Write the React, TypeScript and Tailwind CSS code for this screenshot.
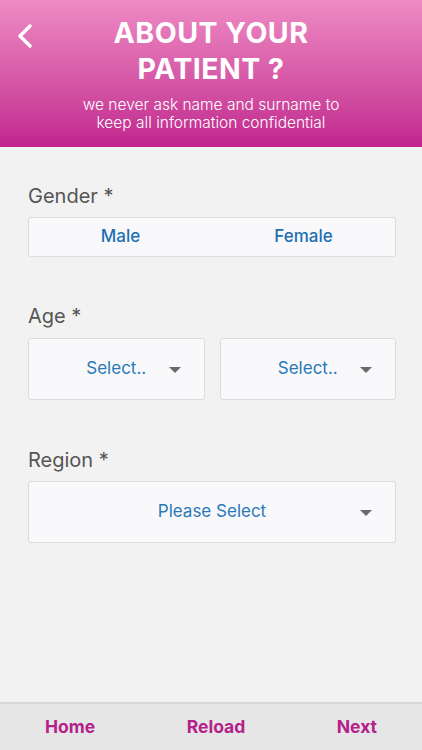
import React from 'react';

const Caret = () => (
  <svg width="12" height="7" viewBox="0 0 12 7" className="shrink-0">
    <path d="M0 0 L12 0 L6 6 Z" fill="#6b6b6b" />
  </svg>
);

const SelectBox = ({ label, className }: { label: string; className?: string }) => (
  <div className={`relative flex items-center justify-center h-[62px] bg-[#f9f9fb] border border-[#dcdcdc] rounded-[3px] ${className ?? ''}`}>
    <span className="text-[17px] text-[#2a78b8]">{label}</span>
    <div className="absolute right-[23px] top-[28px]">
      <Caret />
    </div>
  </div>
);

export default function App() {
  return (
    <div className="w-[422px] h-[750px] flex flex-col bg-[#f2f2f2] overflow-hidden" style={{ fontFamily: 'Inter, Roboto, sans-serif' }}>
      {/* Header */}
      <div className="relative h-[147px] shrink-0 bg-gradient-to-b from-[#ee8ac4] to-[#c0228e] flex flex-col items-center pt-[15px]">
        <button className="absolute left-[14px] top-[22px] text-white">
          <svg width="22" height="28" viewBox="0 0 22 28">
            <path d="M16 4 L6 14 L16 24" stroke="white" strokeWidth="3.5" fill="none" strokeLinecap="round" strokeLinejoin="round" />
          </svg>
        </button>
        <h1 className="text-white font-bold text-[28.5px] leading-[36px] text-center tracking-[0.5px]">
          ABOUT YOUR
          <br />
          PATIENT ?
        </h1>
        <p className="mt-[9px] text-white font-light text-[15.5px] leading-[18px] text-center">
          we never ask name and surname to
          <br />
          keep all information confidential
        </p>
      </div>

      {/* Form */}
      <div className="flex-1 pl-[28px] pr-[26px] pt-[36px]">
        <div className="text-[20px] text-[#555] leading-[26px]">Gender *</div>
        <div className="mt-[8px] h-[40px] flex bg-[#f9f9fb] border border-[#dcdcdc] rounded-[3px]">
          <div className="flex-1 flex items-center justify-center text-[17px] font-medium text-[#1d6fb4]">Male</div>
          <div className="flex-1 flex items-center justify-center text-[17px] font-medium text-[#1d6fb4]">Female</div>
        </div>

        <div className="mt-[46px] text-[20px] text-[#555] leading-[26px]">Age *</div>
        <div className="mt-[9px] flex gap-[15px]">
          <SelectBox label="Select.." className="flex-1" />
          <SelectBox label="Select.." className="flex-1" />
        </div>

        <div className="mt-[47px] text-[20px] text-[#555] leading-[26px]">Region *</div>
        <div className="mt-[8px]">
          <SelectBox label="Please Select" />
        </div>
      </div>

      {/* Footer */}
      <div className="h-[48px] shrink-0 bg-[#e6e6e6] border-t-2 border-[#d8d8d8] flex justify-between items-center px-[45px]">
        <div className="font-bold text-[17.5px] text-[#b5218a]">Home</div>
        <div className="font-bold text-[17.5px] text-[#b5218a]">Reload</div>
        <div className="font-bold text-[17.5px] text-[#b5218a]">Next</div>
      </div>
    </div>
  );
}
